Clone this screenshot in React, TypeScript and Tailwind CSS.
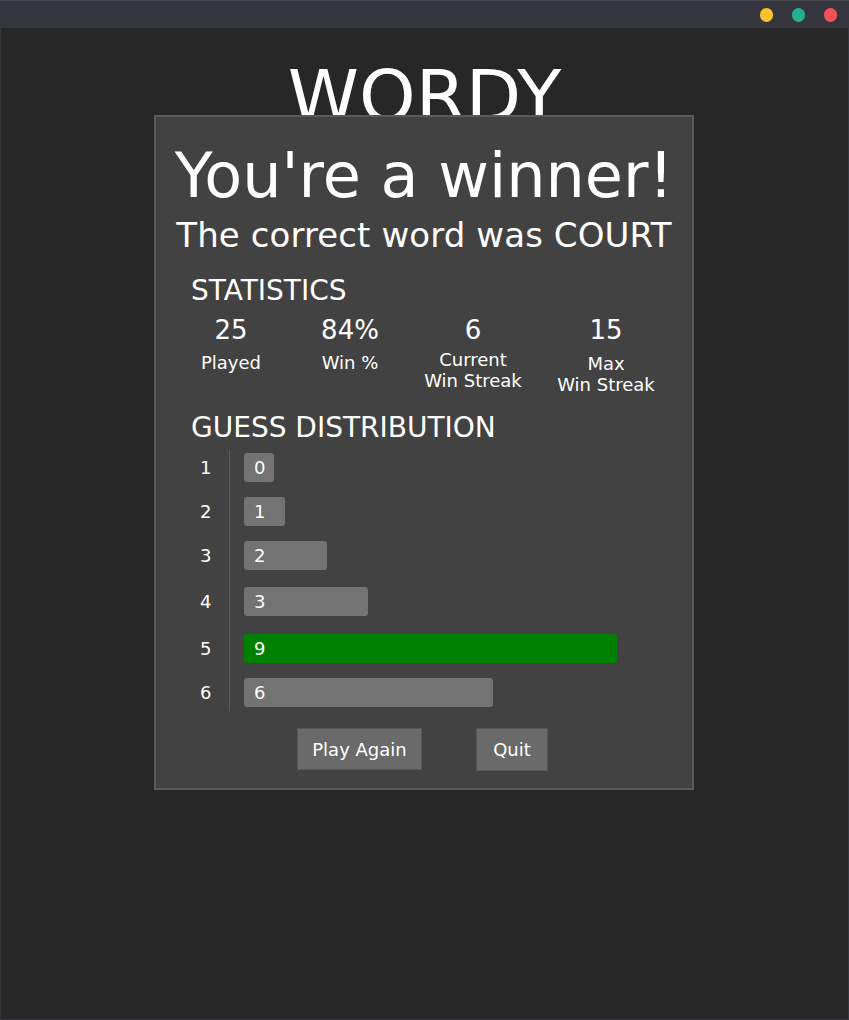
import React from "react";

const dist = [
  { n: 1, c: 0, pt: "pt-[3px]" },
  { n: 2, c: 1, pt: "pt-[15px]" },
  { n: 3, c: 2, pt: "pt-[15px]" },
  { n: 4, c: 3, pt: "pt-[17px]" },
  { n: 5, c: 9, pt: "pt-[18px]", win: true },
  { n: 6, c: 6, pt: "pt-[15px]" },
];

export default function App() {
  return (
    <div
      className="w-[849px] h-[1020px] bg-[#36373e] flex flex-col text-white"
      style={{ fontFamily: '"DejaVu Sans", Verdana, sans-serif' }}
    >
      <div className="h-[28px] shrink-0 border-t border-[#45464d] flex items-center justify-end pr-[12px] gap-[19px]">
        <div className="w-[13px] h-[14px] rounded-full bg-[#fdc22e]" />
        <div className="w-[13px] h-[14px] rounded-full bg-[#23b092]" />
        <div className="w-[13px] h-[14px] rounded-full bg-[#f65157]" />
      </div>
      <div className="flex-1 mx-[1px] mb-[1px] bg-[#272727] relative">
        <div className="pt-[32px] text-center text-[72px] leading-none">WORDY</div>

        <div className="absolute left-[153px] top-[87px] w-[540px] h-[675px] bg-[#424242] border-2 border-[#5a5a5a] flex flex-col">
          <div className="pt-[28px] text-center text-[62px] leading-none">You're a winner!</div>
          <div className="mt-[11px] text-center text-[34px] leading-none tracking-[0.1px]">The correct word was COURT</div>
          <div className="mt-[25px] pl-[35px] text-[28px] leading-none">STATISTICS</div>

          <div className="mt-[12px] pl-[15px] flex h-[80px] items-start">
            <div className="w-[120px] flex flex-col items-center">
              <div className="text-[26px] leading-none">25</div>
              <div className="mt-[9px] text-[18px] leading-[21px]">Played</div>
            </div>
            <div className="w-[118px] flex flex-col items-center">
              <div className="text-[26px] leading-none">84%</div>
              <div className="mt-[9px] text-[18px] leading-[21px]">Win %</div>
            </div>
            <div className="w-[128px] flex flex-col items-center">
              <div className="text-[26px] leading-none">6</div>
              <div className="mt-[6px] text-[18px] leading-[21px] text-center">
                Current
                <br />
                Win Streak
              </div>
            </div>
            <div className="w-[138px] flex flex-col items-center">
              <div className="text-[26px] leading-none">15</div>
              <div className="mt-[10px] text-[18px] leading-[21px] text-center">
                Max
                <br />
                Win Streak
              </div>
            </div>
          </div>

          <div className="mt-[17px] pl-[35px] text-[28px] leading-none">GUESS DISTRIBUTION</div>

          <div className="mt-[8px] ml-[35px] flex flex-col">
            {dist.map((d, i) => (
              <div key={d.n} className="flex">
                <div
                  className={
                    "w-[39px] border-r border-[#5c5c5c] pl-[9px] " +
                    d.pt +
                    (i === dist.length - 1 ? " pb-[4px]" : "")
                  }
                >
                  <div className="h-[29px] flex items-center text-[18px]">{d.n}</div>
                </div>
                <div className={"pl-[14px] " + d.pt}>
                  <div
                    className={
                      "h-[29px] rounded-[3px] flex items-center pl-[10px] text-[18px] " +
                      (d.win ? "bg-[#008000]" : "bg-[#737373]")
                    }
                    style={{ width: Math.max(30, d.c * 41.45) }}
                  >
                    {d.c}
                  </div>
                </div>
              </div>
            ))}
          </div>

          <div className="mt-[17px] flex justify-center gap-[54px] pr-[3px]">
            <button className="w-[125px] h-[42px] bg-[#6a6a6a] border border-[#575757] text-[18px] text-white">
              Play Again
            </button>
            <button className="w-[72px] h-[43px] bg-[#6a6a6a] border border-[#575757] text-[18px] text-white">
              Quit
            </button>
          </div>
        </div>
      </div>
    </div>
  );
}
